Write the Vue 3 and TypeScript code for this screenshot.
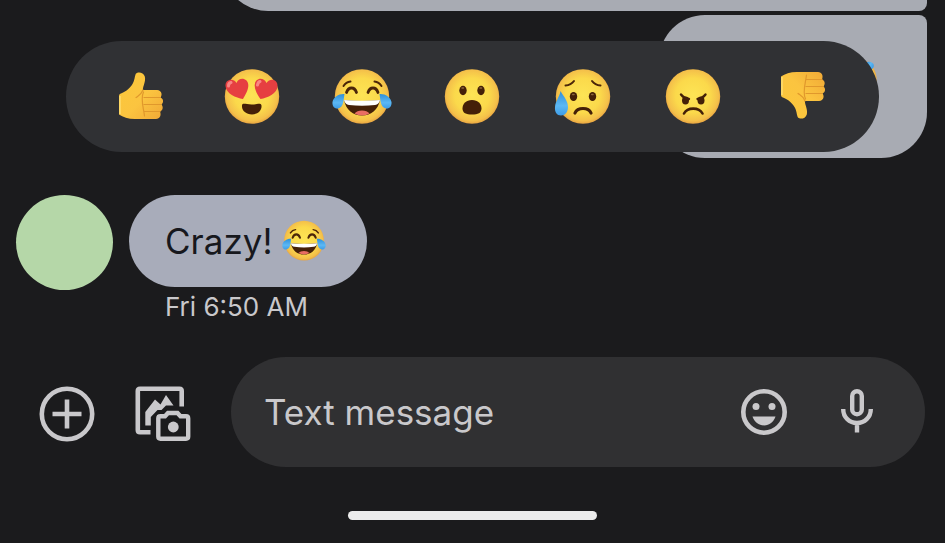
<script setup lang="ts">
import { ref } from 'vue'

interface Reaction {
  id: string
  label: string
}

const reactions: Reaction[] = [
  { id: 'thumb', label: 'Like' },
  { id: 'love', label: 'Love' },
  { id: 'joy', label: 'Laugh' },
  { id: 'wow', label: 'Surprised' },
  { id: 'sad', label: 'Sad' },
  { id: 'angry', label: 'Angry' },
  { id: 'thumb-down', label: 'Dislike' },
]

const draft = ref('')
</script>

<template>
  <svg class="sprites" aria-hidden="true">
    <defs>
      <radialGradient id="face" cx="50%" cy="48%" r="53%">
        <stop offset="0" stop-color="#fde455" />
        <stop offset="0.6" stop-color="#fbd94b" />
        <stop offset="0.88" stop-color="#f4c04a" />
        <stop offset="1" stop-color="#e6a040" />
      </radialGradient>
      <linearGradient id="skin" x1="0" y1="0" x2="1" y2="1">
        <stop offset="0" stop-color="#fcc83a" />
        <stop offset="0.55" stop-color="#fbc440" />
        <stop offset="1" stop-color="#f0a836" />
      </linearGradient>
      <linearGradient id="tear" x1="0" y1="0" x2="0" y2="1">
        <stop offset="0" stop-color="#2f8fd8" />
        <stop offset="0.6" stop-color="#5cb8f4" />
        <stop offset="1" stop-color="#3d9ce6" />
      </linearGradient>

      <symbol id="thumb" viewBox="0 0 60 60">
        <g transform="translate(0 1)">
          <path d="M10 25.500C16 23 19 20 21.500 16C24 12 23.500 8 25 5.500C27 3.500 32.500 4 33.800 8.500C35 13 32 18 31.800 22H46C51 22.500 51.500 27 49.500 29.500C53 31 52.500 35 50.500 36.500C52.500 39 52 42.500 49 43.500C50.500 47 49 51 45 51L24 51C17 51 12 49 8 46.500V28C8 26.500 9 25.800 10 25.500Z" fill="url(#skin)" />
          <path d="M32 22C30 27 27 28 25 29.500M33 29.500H49M33 36.500H50M33 43.500H49M32.500 24C29 31 33 42 33.500 48" fill="none" stroke="#e0982c" stroke-width="1.200" stroke-linecap="round" />
          <path d="M9 28V46" stroke="#fedd72" stroke-width="1.500" />
        </g>
      </symbol>

      <symbol id="thumb-down" viewBox="0 0 60 60">
        <use href="#thumb" width="60" height="60" transform="matrix(1 0 0 -1 -1 57)" />
      </symbol>

      <symbol id="love" viewBox="0 0 60 60">
        <circle cx="30" cy="29.500" r="27.200" fill="url(#face)" />
        <g fill="#e63f41">
          <path d="M21 32C14 31 4 26.500 3.500 19C3 12 11.500 10.500 14.500 16C17 9.500 26 11 26.300 18C26.500 23 23 28.500 21 32Z" />
          <path d="M38.500 32C35.500 28 32.500 22.500 32.700 18C33 11 41.500 9.500 44.500 16C48 10.500 56 12 55.500 19.500C55 26.500 45.500 31 38.500 32Z" />
        </g>
        <path d="M6.500 19Q6.500 16 9 15.500M35.500 18Q36 15 38 14.500" fill="none" stroke="#f98583" stroke-width="3" stroke-linecap="round" />
        <path d="M20 38.500C20.500 35.500 23.500 37.500 29.500 37.500S38.500 35.500 39.500 38.500C40 43.500 36 47.500 30 47.500S19.500 43.500 20 38.500Z" fill="#442008" />
      </symbol>

      <symbol id="joy" viewBox="0 0 60 60">
        <circle cx="30" cy="29.500" r="27.200" fill="url(#face)" />
        <path d="M11.500 19Q14 15 18.500 14.500M42.500 14.500Q47 15 49.500 19" fill="none" stroke="#4c2609" stroke-width="2" stroke-linecap="round" />
        <path d="M14.500 25.500C16.500 19.500 22.500 19.500 24.500 25.500M36 25.500C38 19.500 44 19.500 46 25.500" fill="none" stroke="#4c2609" stroke-width="2.800" stroke-linecap="round" />
        <path d="M12 33Q30 35 48 33C46 43 39 48.500 30 48.500S14 43 12 33Z" fill="#442008" />
        <path d="M12 33Q30 34.500 48 33Q47 37.500 43 38Q30 39.500 17 38Q13 37.500 12 33Z" fill="#fff" />
        <path d="M22.500 46.500Q25 43.500 30 43.500T37.500 46.500Q34 48.500 30 48.500T22.500 46.500Z" fill="#e86d63" />
        <path d="M12.500 27C7 26.500 1.500 30 .5 35C0 39 2.500 42 6 41.500C12 40.500 11.500 32 12.500 27ZM47.500 27C53 26.500 58.500 30 59.500 35C60 39 57.500 42 54 41.500C48 40.500 48.500 32 47.500 27Z" fill="url(#tear)" />
      </symbol>

      <symbol id="wow" viewBox="0 0 60 60">
        <circle cx="30" cy="29.500" r="27.200" fill="url(#face)" />
        <g fill="#442008">
          <ellipse cx="21" cy="23.500" rx="3.700" ry="4.700" />
          <ellipse cx="39" cy="23.500" rx="3.700" ry="4.700" />
          <path d="M30 33C36 33 39.500 37 39.500 41.500C39.500 46 36 47.500 30 47.500S20.500 46 20.500 41.500C20.500 37 24 33 30 33Z" />
        </g>
        <path d="M20 21H21.500M38 21H39.500" stroke="#8b653c" stroke-width="1.500" stroke-linecap="round" />
      </symbol>

      <symbol id="sad" viewBox="0 0 60 60">
        <circle cx="30" cy="29.500" r="27.200" fill="url(#face)" />
        <path d="M12.500 18.500Q18 18 21 14M39 14Q42 18 47.500 18.500" fill="none" stroke="#4c2609" stroke-width="2" stroke-linecap="round" />
        <ellipse cx="20.500" cy="29.500" rx="3.700" ry="4.600" fill="#442008" />
        <ellipse cx="39.500" cy="29.500" rx="3.700" ry="4.600" fill="#442008" />
        <path d="M19.700 27.500H21M38.700 27.500H40" stroke="#8b653c" stroke-width="1.500" stroke-linecap="round" />
        <path d="M22 46C24.500 40 35.500 40 38 46" fill="none" stroke="#442008" stroke-width="3.200" stroke-linecap="round" />
        <path d="M7.500 24C11 30 15 34 15 40C15 45 12 48.500 8 48.500S1.500 45 2 40C2.500 34 6.500 30 7.500 24Z" fill="url(#tear)" />
      </symbol>

      <symbol id="angry" viewBox="0 0 60 60">
        <circle cx="30" cy="29.500" r="27.200" fill="url(#face)" />
        <g fill="#442008">
          <ellipse cx="22.500" cy="33.500" rx="3.500" ry="4" />
          <ellipse cx="38" cy="33.500" rx="3.500" ry="4" />
        </g>
        <path d="M18 27.500Q21 31.500 26 32M42.500 27.500Q39.500 31.500 34.500 32" fill="none" stroke="#442008" stroke-width="2.400" stroke-linecap="round" />
        <path d="M21 46.500C24.500 40 36 40 39.500 46.500" fill="none" stroke="#442008" stroke-width="2.600" stroke-linecap="round" />
      </symbol>
    </defs>
  </svg>

  <main class="chat">
    <section class="outgoing" aria-label="Sent messages">
      <div class="sent sent-long"></div>
      <div class="sent sent-short">
        <svg class="sent-emoji" viewBox="0 0 60 60" role="img" aria-label="Joy"><use href="#joy" /></svg>
      </div>
      <div class="reactions" role="toolbar" aria-label="Reactions">
        <button v-for="r in reactions" :key="r.id" type="button" class="reaction" :aria-label="r.label">
          <svg class="emoji" viewBox="0 0 60 60"><use :href="`#${r.id}`" /></svg>
        </button>
      </div>
    </section>

    <section class="incoming" aria-label="Received message">
      <div class="avatar"></div>
      <div class="received">
        <p class="bubble">
          <span>Crazy!</span>
          <svg class="inline-emoji" viewBox="0 0 60 60" role="img" aria-label="Joy"><use href="#joy" /></svg>
        </p>
        <time class="time">Fri 6:50 AM</time>
      </div>
    </section>

    <form class="composer" @submit.prevent>
      <div class="tools">
        <button type="button" class="tool" aria-label="Add attachment">
          <svg width="56" height="56" viewBox="0 0 56 56" fill="none" stroke="currentColor">
            <circle cx="28" cy="28" r="25.200" stroke-width="4.600" />
            <path d="M28 13.500V42.500M13.500 28H42.500" stroke-width="4.600" />
          </svg>
        </button>
        <button type="button" class="tool" aria-label="Gallery and camera">
          <svg width="56" height="56" viewBox="0 0 56 56" fill="none" stroke="currentColor">
            <path d="M15.500 46.200H5Q2.800 46.200 2.800 44V5Q2.800 2.800 5 2.800H44.500Q46.700 2.800 46.700 5V20.500" stroke-width="4.600" />
            <path d="M10.300 39.500V26L20 13.500L25.500 18.500L31 9L38.500 19.500H31L26.500 24H22.500L15.800 31V39.500Z" fill="currentColor" stroke="none" />
            <path d="M25.500 30.300H30L33 27H42.500L45.500 30.300H51Q53.200 30.300 53.200 32.500V50.500Q53.200 52.700 51 52.700H25.500Q23.300 52.700 23.300 50.500V32.500Q23.300 30.300 25.500 30.300Z" stroke-width="4.400" />
            <circle cx="38.300" cy="41" r="5.400" fill="currentColor" stroke="none" />
          </svg>
        </button>
      </div>
      <div class="field">
        <input v-model="draft" class="input" type="text" placeholder="Text message" aria-label="Text message" />
        <button type="button" class="tool" aria-label="Emoji">
          <svg width="48" height="48" viewBox="0 0 48 48">
            <circle cx="24" cy="24" r="20.700" fill="none" stroke="currentColor" stroke-width="4.600" />
            <g fill="currentColor">
              <circle cx="16" cy="18.500" r="3.500" />
              <circle cx="32" cy="18.500" r="3.500" />
              <path d="M12.500 28.500H35.500C33.500 34 29.500 37.500 24 37.500S14.500 34 12.500 28.500Z" />
            </g>
          </svg>
        </button>
        <button type="button" class="tool" aria-label="Voice message">
          <svg width="34" height="48" viewBox="0 0 34 48" fill="none" stroke="currentColor" stroke-width="4.400">
            <rect x="12.200" y="3.200" width="9.600" height="23" rx="4.800" />
            <path d="M3.200 21C3.200 29.500 9.500 35 17 35S30.800 29.500 30.800 21M17 35V44.500" />
          </svg>
        </button>
      </div>
    </form>

    <div class="home-bar"></div>
  </main>
</template>

<style>
body {
  background: #1b1b1d;
}
</style>

<style scoped>
.sprites {
  position: absolute;
  width: 0;
  height: 0;
}

.chat {
  display: flex;
  flex-direction: column;
  overflow: hidden;
  color: #c9c8cb;
  background: #1b1b1d;
  font-family: Inter, "Open Sans", sans-serif;
}

button {
  display: grid;
  place-items: center;
  padding: 0;
  border: 0;
  color: inherit;
  background: none;
}

svg {
  display: block;
  flex: none;
}

.outgoing {
  position: relative;
  display: flex;
  flex-direction: column;
  align-items: flex-end;
  gap: 4px;
  padding-right: 18px;
}

.sent {
  box-sizing: border-box;
  background: #a8abb3;
}

.sent-long {
  width: 76%;
  height: 92px;
  margin-top: -81px;
  border-radius: 46px 8px 8px 46px;
}

.sent-short {
  display: flex;
  align-items: flex-start;
  justify-content: flex-end;
  width: 268px;
  height: 143px;
  padding: 42px 48px;
  border-radius: 46px 8px 46px 46px;
}

.sent-emoji {
  width: 44px;
  height: 44px;
  transform: rotate(-60deg);
}

.reactions {
  position: absolute;
  right: 66px;
  bottom: 6px;
  left: 66px;
  box-sizing: border-box;
  display: grid;
  grid-template-columns: repeat(7, 1fr);
  height: 111px;
  padding: 0 20px;
  border-radius: 56px;
  background: #303134;
}

.emoji {
  width: 60px;
  height: 60px;
}

.incoming {
  display: flex;
  gap: 16px;
  padding: 37px 16px 0;
}

.avatar {
  width: 97px;
  height: 95px;
  border-radius: 50%;
  background: #b5d7a8;
}

.bubble {
  display: flex;
  align-items: center;
  gap: 10px;
  height: 92px;
  margin: 0;
  padding: 0 41px 0 36px;
  border-radius: 46px;
  color: #17181d;
  background: #a8acba;
  font-size: 35px;
}

.inline-emoji {
  width: 44px;
  height: 44px;
}

.time {
  display: block;
  padding-left: 36px;
  font-size: 26px;
  line-height: 40px;
}

.composer {
  display: flex;
  align-items: center;
  gap: 40px;
  padding: 30px 20px 0 39px;
}

.tools {
  display: flex;
  gap: 40px;
  padding-top: 4px;
}

.field {
  display: flex;
  flex: 1;
  align-items: center;
  gap: 52px;
  box-sizing: border-box;
  min-width: 0;
  height: 110px;
  padding: 0 51px 0 33px;
  border-radius: 55px;
  background: #303032;
}

.input {
  flex: 1;
  min-width: 0;
  padding: 0;
  border: 0;
  outline: 0;
  color: inherit;
  background: none;
  font: inherit;
  font-size: 35px;
}

.input::placeholder {
  color: inherit;
  opacity: 1;
}

.home-bar {
  align-self: center;
  width: 249px;
  height: 9px;
  margin: 44px 0 23px;
  border-radius: 5px;
  background: #ececec;
}
</style>
